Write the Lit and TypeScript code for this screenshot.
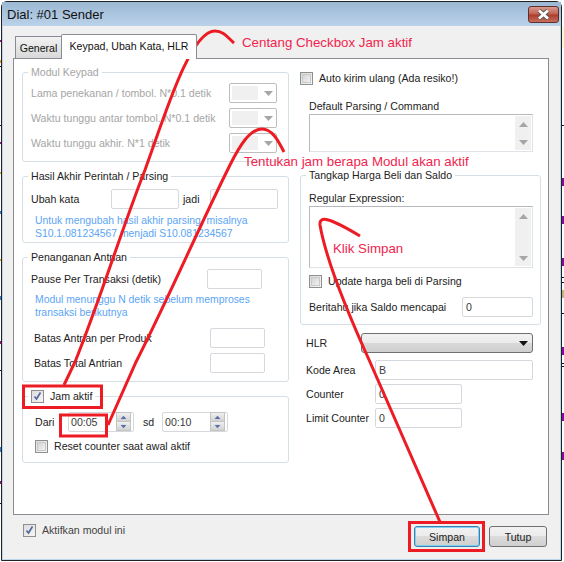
import { LitElement, html, css, svg } from "lit";
import { customElement } from "lit/decorators.js";

const check = (on = false) => html`<span class="cb">${on ? html`<svg width="11" height="11" viewBox="0 0 11 11"><path d="M2.5 5.5 L4.5 8 L8.5 1.5" fill="none" stroke="#56699f" stroke-width="1.7"/></svg>` : html`<i></i>`}</span>`;

const tri = (up: boolean) => svg`<svg class="tri" width="9" height="5" viewBox="0 0 9 5"><path d="${up ? "M0 5 L4.5 0 L9 5Z" : "M0 0 L9 0 L4.5 5Z"}" fill="#a6a6a6"/></svg>`;

const spin = (v: string) => html`<span class="spin"><span class="val">${v}</span><span class="btns"><span class="sb">${tri(true)}</span><span class="sb">${tri(false)}</span></span></span>`;

const combo = () => html`<span class="combo"><i></i>${tri(false)}</span>`;

const memo = (h: number) => html`<div class="memo" style="height:${h}px"><span class="vs">${tri(true)}${tri(false)}</span></div>`;

const ticksR: [number, number, string][] = [[125, 1, "#111"], [178, 8, "#8a0a9a"], [216, 8, "#8a0a9a"], [258, 8, "#8a0a9a"], [277, 1, "#111"], [282, 1, "#111"], [290, 8, "#c9b27a"], [313, 1, "#111"], [347, 8, "#8a0a9a"], [363, 1, "#111"], [366, 1, "#111"], [413, 8, "#8a0a9a"], [452, 8, "#8a0a9a"]];
const ticksL: [number, number, string][] = [[40, 2, "#a0108a"], [60, 3, "#e0a020"], [66, 1, "#111"], [125, 1, "#111"], [142, 2, "#a0108a"], [172, 2, "#e0a020"], [211, 3, "#2a80d0"], [259, 2, "#e0a020"], [296, 4, "#2a80d0"], [341, 3, "#a0108a"], [370, 1, "#111"], [447, 5, "#2a80d0"], [481, 3, "#a0108a"], [503, 1, "#111"]];

@customElement("app-root")
export class AppRoot extends LitElement {
  static styles = css`
    :host { display: block; width: 564px; height: 562px; position: relative; overflow: hidden; background: #fff;
      font: 10.6px "Liberation Sans", Arial, sans-serif; color: #222; }
    .win { width: 561px; height: 560px; margin: 1px 0 0 1px; box-sizing: border-box; border: 1px solid #222; border-radius: 6px 6px 0 0;
      background: #bcd6ec; padding: 0 1px 1px 1px; display: flex; flex-direction: column; }
    .title { height: 24px; flex: none; display: flex; align-items: center; justify-content: space-between; font-size: 13px; color: #111; padding: 0 2px 0 5px; margin: 0 -1px; background: linear-gradient(#9cb8d3, #bad2e9); }
    .close { box-sizing: border-box; width: 31px; height: 17px; border: 1px solid #5e3030; border-radius: 3px; background: linear-gradient(#d99a8e, #c2604f 48%, #ad3a2c 52%, #c4705c); display: flex; align-items: center; justify-content: center; }
    .body { flex: 1; background: #f0f0f0; display: flex; flex-direction: column; padding: 0 10px; }
    .tabs { display: flex; align-items: flex-end; height: 32px; flex: none; padding-left: 2px; position: relative; z-index: 1; }
    .tab { box-sizing: border-box; border: 1px solid #898c95; border-bottom: 0; display: flex; align-items: center; justify-content: center; color: #111; }
    .tab.g { width: 46px; height: 22px; background: linear-gradient(#f2f2f2, #d9d9d9); border-right: 0; }
    .tab.k { width: 136px; height: 25px; background: #fff; margin-bottom: -1px; border-radius: 2px 2px 0 0; padding-bottom: 3px; }
    .panel { width: 536px; height: 457px; flex: none; box-sizing: border-box; border: 1px solid #898c95; background: #fff; display: grid; grid-template-columns: 267px 241px; column-gap: 11px; padding: 6px 0 0 8px; align-content: start; }
    .col { display: flex; flex-direction: column; min-width: 0; }
    fieldset { box-sizing: border-box; margin: 0; padding: 0 0 0 8px; border: 1px solid #d5dfe5; border-radius: 3px; min-width: 0; }
    legend { padding: 0 3px; margin-left: -3px; line-height: 14px; height: 14px; }
    .dis { color: #a5a5a5; }
    .row { display: flex; align-items: center; height: 20px; white-space: nowrap; }
    .inp { box-sizing: border-box; border: 1px solid #d5d9de; border-radius: 2px; background: #fff; display: flex; align-items: center; padding-left: 3px; height: 20px; color: #3a3a3a; flex: none; }
    .note { color: #5ba5f5; font-size: 10.4px; line-height: 13px; margin-left: 4px; white-space: nowrap; }
    .combo { margin-left: auto; width: 48px; height: 20px; box-sizing: border-box; border: 1px solid #bdbdbd; border-radius: 2px; display: flex; align-items: center; padding: 2px; gap: 6px; flex: none; }
    .combo i { width: 26px; height: 14px; background: #f0f0f0; }
    .cb { box-sizing: border-box; width: 13px; height: 13px; border: 1px solid #8e8f8f; background: linear-gradient(135deg, #dcdcdc, #f6f6f6); display: inline-flex; align-items: center; justify-content: center; flex: none; margin-right: 6px; }
    .cb i { width: 9px; height: 9px; background: linear-gradient(135deg, #d4d4d4, #f2f2f2); border: 1px solid #c9c9c9; box-sizing: border-box; }
    .spin { box-sizing: border-box; width: 66px; height: 20px; border: 1px solid #d5d9de; border-radius: 2px; display: flex; align-items: center; padding-left: 2px; color: #3a3a3a; flex: none; }
    .val { flex: 1; }
    .btns { width: 15px; margin-right: 2px; display: flex; flex-direction: column; }
    .sb { height: 8px; display: flex; align-items: center; justify-content: center; background: linear-gradient(#f0f0f0, #d2d2d2); border: 1px solid #c4c4c4; margin-top: -1px; }
    .sb svg { transform: scale(0.7); }
    .sb svg path { fill: #5a6fa8; }
    .memo { box-sizing: border-box; width: 224px; border: 1px solid #b5b9bd; border-bottom-color: #dfe3e8; border-right-color: #dfe3e8; display: flex; justify-content: flex-end; padding: 1px; }
    .vs { width: 16px; background: #f0f0f0; display: flex; flex-direction: column; justify-content: space-between; align-items: center; padding: 6px 0 5px; box-sizing: border-box; }
    .select { box-sizing: border-box; width: 172px; height: 20px; border: 1px solid #6f6f6f; border-radius: 3px; background: linear-gradient(#f2f2f2, #ebebeb 50%, #d8d8d8 50%, #cfcfcf); display: flex; align-items: center; justify-content: flex-end; padding-right: 4px; }
    .foot { flex: 1; display: flex; align-items: flex-start; padding: 9px 0 0 10px; }
    .foot .lbl { height: 13px; display: flex; align-items: center; margin-top: -1px; color: #444; }
    .btn { box-sizing: border-box; height: 21px; border: 1px solid #707070; border-radius: 3px; background: linear-gradient(#f2f2f2, #ebebeb 50%, #dcdcdc 50%, #cfcfcf); display: flex; align-items: center; justify-content: center; }
    .btn.s { width: 66px; margin-left: auto; margin-top: 2px; border-color: #3c7fb1; box-shadow: inset 0 0 0 1px #7fd0f5; }
    .btn.t { width: 58px; margin: 2px 3px 0 9px; }
    .over { position: absolute; left: 0; top: 0; width: 564px; height: 562px; pointer-events: none; }
    .ann { position: absolute; color: #f0254e; font-size: 13.3px; line-height: 16px; white-space: nowrap; }
  `;

  render() {
    return html`
      <div class="win">
        <div class="title"><span>Dial: #01 Sender</span>
          <span class="close"><svg width="17" height="11" viewBox="0 0 17 11"><path d="M4 1.5 L13 9.5 M13 1.5 L4 9.5" stroke="#555" stroke-width="4.4"/><path d="M4 1.5 L13 9.5 M13 1.5 L4 9.5" stroke="#fff" stroke-width="2.8"/></svg></span>
        </div>
        <div class="body">
          <div class="tabs"><div class="tab g">General</div><div class="tab k">Keypad, Ubah Kata, HLR</div></div>
          <div class="panel">
            <div class="col">
              <fieldset class="dis" style="height:97px">
                <legend>Modul Keypad</legend>
                <div class="row" style="margin-top:4px;padding-right:11px">Lama penekanan / tombol. N*0.1 detik${combo()}</div>
                <div class="row" style="margin-top:5px;padding-right:11px">Waktu tunggu antar tombol. N*0.1 detik${combo()}</div>
                <div class="row" style="margin-top:5px;padding-right:11px">Waktu tunggu akhir. N*1 detik${combo()}</div>
              </fieldset>
              <fieldset style="height:74px;margin-top:7px">
                <legend>Hasil Akhir Perintah / Parsing</legend>
                <div class="row" style="margin-top:6px">Ubah kata<span class="inp" style="width:68px;margin-left:auto"></span><span style="width:31px;padding-left:4px;box-sizing:border-box">jadi</span><span class="inp" style="width:68px;margin-right:10px"></span></div>
                <div class="note" style="margin-top:5px">Untuk mengubah hasil akhir parsing, misalnya<br>S10.1.081234567 menjadi S10.081234567</div>
              </fieldset>
              <fieldset style="height:132px;margin-top:7px">
                <legend>Penanganan Antrian</legend>
                <div class="row" style="margin-top:5px">Pause Per Transaksi (detik)<span class="inp" style="width:55px;margin-left:auto;margin-right:26px"></span></div>
                <div class="note" style="margin-top:4px">Modul menunggu N detik sebelum memproses<br>transaksi berikutnya</div>
                <div class="row" style="margin:9px 0 0 3px">Batas Antrian per Produk<span class="inp" style="width:55px;margin-left:auto;margin-right:23px"></span></div>
                <div class="row" style="margin:5px 0 0 3px">Batas Total Antrian<span class="inp" style="width:55px;margin-left:auto;margin-right:23px"></span></div>
              </fieldset>
              <fieldset style="height:74px;margin-top:7px">
                <legend><span style="display:inline-flex;align-items:center">${check(true)}Jam aktif</span></legend>
                <div class="row" style="margin:9px 0 0 4px"><span style="width:33px">Dari</span>${spin("00:05")}<span style="width:28px;padding-left:9px;box-sizing:border-box">sd</span>${spin("00:10")}</div>
                <div class="row" style="margin:4px 0 0 4px;">${check()}Reset counter saat awal aktif</div>
              </fieldset>
            </div>
            <div class="col">
              <div class="row" style="margin-top:6px;height:14px">${check()}Auto kirim ulang (Ada resiko!)</div>
              <div style="margin:13px 0 0 9px">
                <div class="row" style="height:15px">Default Parsing / Command</div>
                <div style="margin-top:1px">${memo(38)}</div>
              </div>
              <fieldset style="height:157px;margin-top:16px">
                <legend>Tangkap Harga Beli dan Saldo</legend>
                <div class="row" style="margin-top:8px;height:15px">Regular Expression:</div>
                <div style="margin-top:1px">${memo(62)}</div>
                <div class="row" style="margin-top:5px;height:16px">${check()}Update harga beli di Parsing</div>
                <div class="row" style="margin-top:8px">Beritahu jika Saldo mencapai<span class="inp" style="width:71px;margin-left:auto;margin-right:7px">0</span></div>
              </fieldset>
              <div class="row" style="margin:8px 0 0 6px">HLR<span style="margin-left:auto;margin-right:8px" class="select"><svg width="9" height="5" viewBox="0 0 9 5"><path d="M0 0 L9 0 L4.5 5Z" fill="#111"/></svg></span></div>
              <div class="row" style="margin:7px 0 0 6px">Kode Area<span class="inp" style="width:158px;margin-left:auto;margin-right:8px">B</span></div>
              <div class="row" style="margin:4px 0 0 6px">Counter<span class="inp" style="width:87px;margin-left:auto;margin-right:79px">0</span></div>
              <div class="row" style="margin:4px 0 0 6px">Limit Counter<span class="inp" style="width:87px;margin-left:auto;margin-right:79px">0</span></div>
            </div>
          </div>
          <div class="foot">${check(true)}<span class="lbl">Aktifkan modul ini</span>
            <div class="btn s">Simpan</div><div class="btn t">Tutup</div></div>
        </div>
      </div>
      <svg class="over" viewBox="0 0 564 562">
        ${ticksR.map(([y, h, c]) => svg`<rect x="562" y="${y}" width="2" height="${h}" fill="${c}"/>`)}
        ${ticksL.map(([y, h, c]) => svg`<rect x="0" y="${y}" width="1" height="${h}" fill="${c}"/>`)}
        <rect x="562" y="27" width="2" height="21" fill="#fdf6d8"/>
        <g fill="none" stroke="#ed1c24">
          <path stroke-width="3" d="M64 385 L75 362 C 100 300, 125 220, 145 170 C 165 115, 190 31, 215 31 C 224 31, 228 38, 234 43"/>
          <path stroke-width="3" d="M108 425 L136 362 C 170 295, 200 225, 230 165 C 240 145, 250 129, 262 129 C 272 129, 278 140, 284 152"/>
          <path stroke-width="3" d="M440 522 L370 362 C 350 318, 326 260, 320 225 C 319 215, 330 218, 360 236"/>
          <rect x="23.5" y="386" width="78" height="21.5" stroke-width="3"/>
          <rect x="60.5" y="415" width="46" height="21" stroke-width="3"/>
          <rect x="409.5" y="522.5" width="74" height="28" stroke-width="3"/>
        </g>
      </svg>
      <span class="ann" style="left:242px;top:35px">Centang Checkbox Jam aktif</span>
      <span class="ann" style="left:244px;top:154px">Tentukan jam berapa Modul akan aktif</span>
      <span class="ann" style="left:333px;top:241px">Klik Simpan</span>
    `;
  }
}
